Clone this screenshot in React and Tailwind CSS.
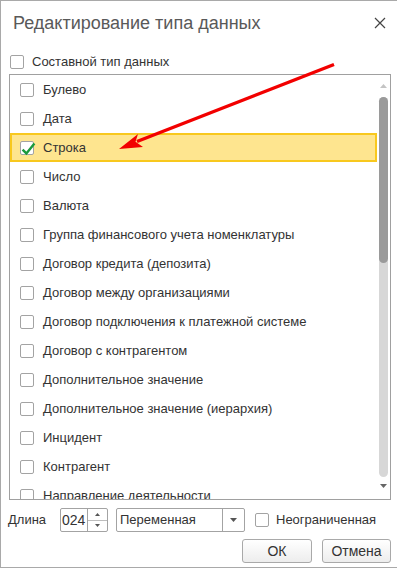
const items = [
  'Булево',
  'Дата',
  'Строка',
  'Число',
  'Валюта',
  'Группа финансового учета номенклатуры',
  'Договор кредита (депозита)',
  'Договор между организациями',
  'Договор подключения к платежной системе',
  'Договор с контрагентом',
  'Дополнительное значение',
  'Дополнительное значение (иерархия)',
  'Инцидент',
  'Контрагент',
  'Направление деятельности',
];

function Box({ checked }) {
  return (
    <span className="relative w-[14px] h-[14px] shrink-0 rounded-[2px] border border-[#a3a3a3] bg-white">
      {checked && (
        <svg className="absolute left-0 top-0 overflow-visible" width="14" height="14" viewBox="0 0 14 14">
          <path d="M1.6 7.6 L5.4 11.4 L13.4 1.4" fill="none" stroke="#1c9a3c" strokeWidth="2.4" />
        </svg>
      )}
    </span>
  );
}

export default function App() {
  return (
    <div className="relative w-[398px] h-[568px] bg-white border border-[#a9a9a9] flex flex-col font-['Liberation_Sans',Arial,sans-serif] text-[13px] text-[#333]">
      <div className="flex items-center justify-between h-[43px] pl-[12px] pr-[11px] pt-[1px]">
        <span className="text-[18px] text-[#595959]">Редактирование типа данных</span>
        <svg width="12" height="12" viewBox="0 0 12 12">
          <path d="M1 1 L11 11 M11 1 L1 11" stroke="#444" strokeWidth="1.2" />
        </svg>
      </div>

      <div className="flex items-center h-[24px] mt-[6px] pl-[9px]">
        <Box />
        <span className="ml-[8px]">Составной тип данных</span>
      </div>

      <div className="ml-[8px] w-[382px] h-[426px] border border-[#a0a0a0] flex overflow-hidden">
        <div className="w-[367px] flex flex-col">
          {items.map((t, i) => (
            <div
              key={t}
              className={
                'flex items-center shrink-0 h-[29px] pl-[8px] border-2 ' +
                (i === 2 ? 'bg-[#fee58f] border-[#f8c81e]' : 'border-transparent')
              }
            >
              <Box checked={i === 2} />
              <span className="ml-[9px] whitespace-nowrap">{t}</span>
            </div>
          ))}
        </div>
        <div className="w-[13px] flex flex-col items-center pt-[9px]">
          <svg width="7" height="4" viewBox="0 0 7 4">
            <path d="M0 4 L3.5 0 L7 4 Z" fill="#c4c4c4" />
          </svg>
          <div className="mt-[9px] w-[9px] h-[380px] rounded-full bg-[#d7d7d7] flex flex-col">
            <div className="h-[166px] rounded-full bg-[#9a9a9a]" />
          </div>
          <svg className="mt-[7px]" width="7" height="4" viewBox="0 0 7 4">
            <path d="M0 0 L3.5 4 L7 0 Z" fill="#666" />
          </svg>
        </div>
      </div>

      <div className="flex items-center mt-[8px] pl-[7px] h-[24px]">
        <span className="w-[52px]">Длина</span>
        <div className="w-[48px] h-[24px] border border-[#a3a3a3] rounded-[2px] flex">
          <span className="w-[26px] flex items-center pl-[1px] text-[14px]">024</span>
          <div className="flex-1 border-l border-[#a3a3a3] flex flex-col">
            <div className="flex-1 flex items-center justify-center border-b border-[#bdbdbd]">
              <svg width="5" height="3" viewBox="0 0 5 3"><path d="M0 3 L2.5 0 L5 3 Z" fill="#555" /></svg>
            </div>
            <div className="flex-1 flex items-center justify-center">
              <svg width="5" height="3" viewBox="0 0 5 3"><path d="M0 0 L2.5 3 L5 0 Z" fill="#555" /></svg>
            </div>
          </div>
        </div>
        <div className="ml-[8px] w-[129px] h-[24px] border border-[#a3a3a3] rounded-[2px] flex">
          <span className="w-[105px] flex items-center pl-[3px]">Переменная</span>
          <div className="flex-1 border-l border-[#a3a3a3] flex items-center justify-center">
            <svg width="7" height="4" viewBox="0 0 7 4"><path d="M0 0 L3.5 4 L7 0 Z" fill="#555" /></svg>
          </div>
        </div>
        <span className="ml-[10px] flex items-center">
          <Box />
        </span>
        <span className="ml-[7px]">Неограниченная</span>
      </div>

      <div className="flex justify-end gap-[10px] pr-[6px] mt-[7px]">
        <button className="w-[70px] h-[24px] rounded-[3px] border border-[#a9a9a9] bg-gradient-to-b from-white to-[#ededed] text-[14px] text-[#333]">
          ОК
        </button>
        <button className="w-[69px] h-[24px] rounded-[3px] border border-[#a9a9a9] bg-gradient-to-b from-white to-[#ededed] text-[14px] text-[#333]">
          Отмена
        </button>
      </div>

      <svg className="absolute left-0 top-0 pointer-events-none" width="397" height="571" viewBox="0 0 397 571">
        <line x1="333" y1="63.5" x2="136" y2="140.5" stroke="#f20000" strokeWidth="3.4" />
        <path d="M118 148 L137 133 L134.5 140.8 L142 146 Z" fill="#f20000" />
      </svg>
    </div>
  );
}
